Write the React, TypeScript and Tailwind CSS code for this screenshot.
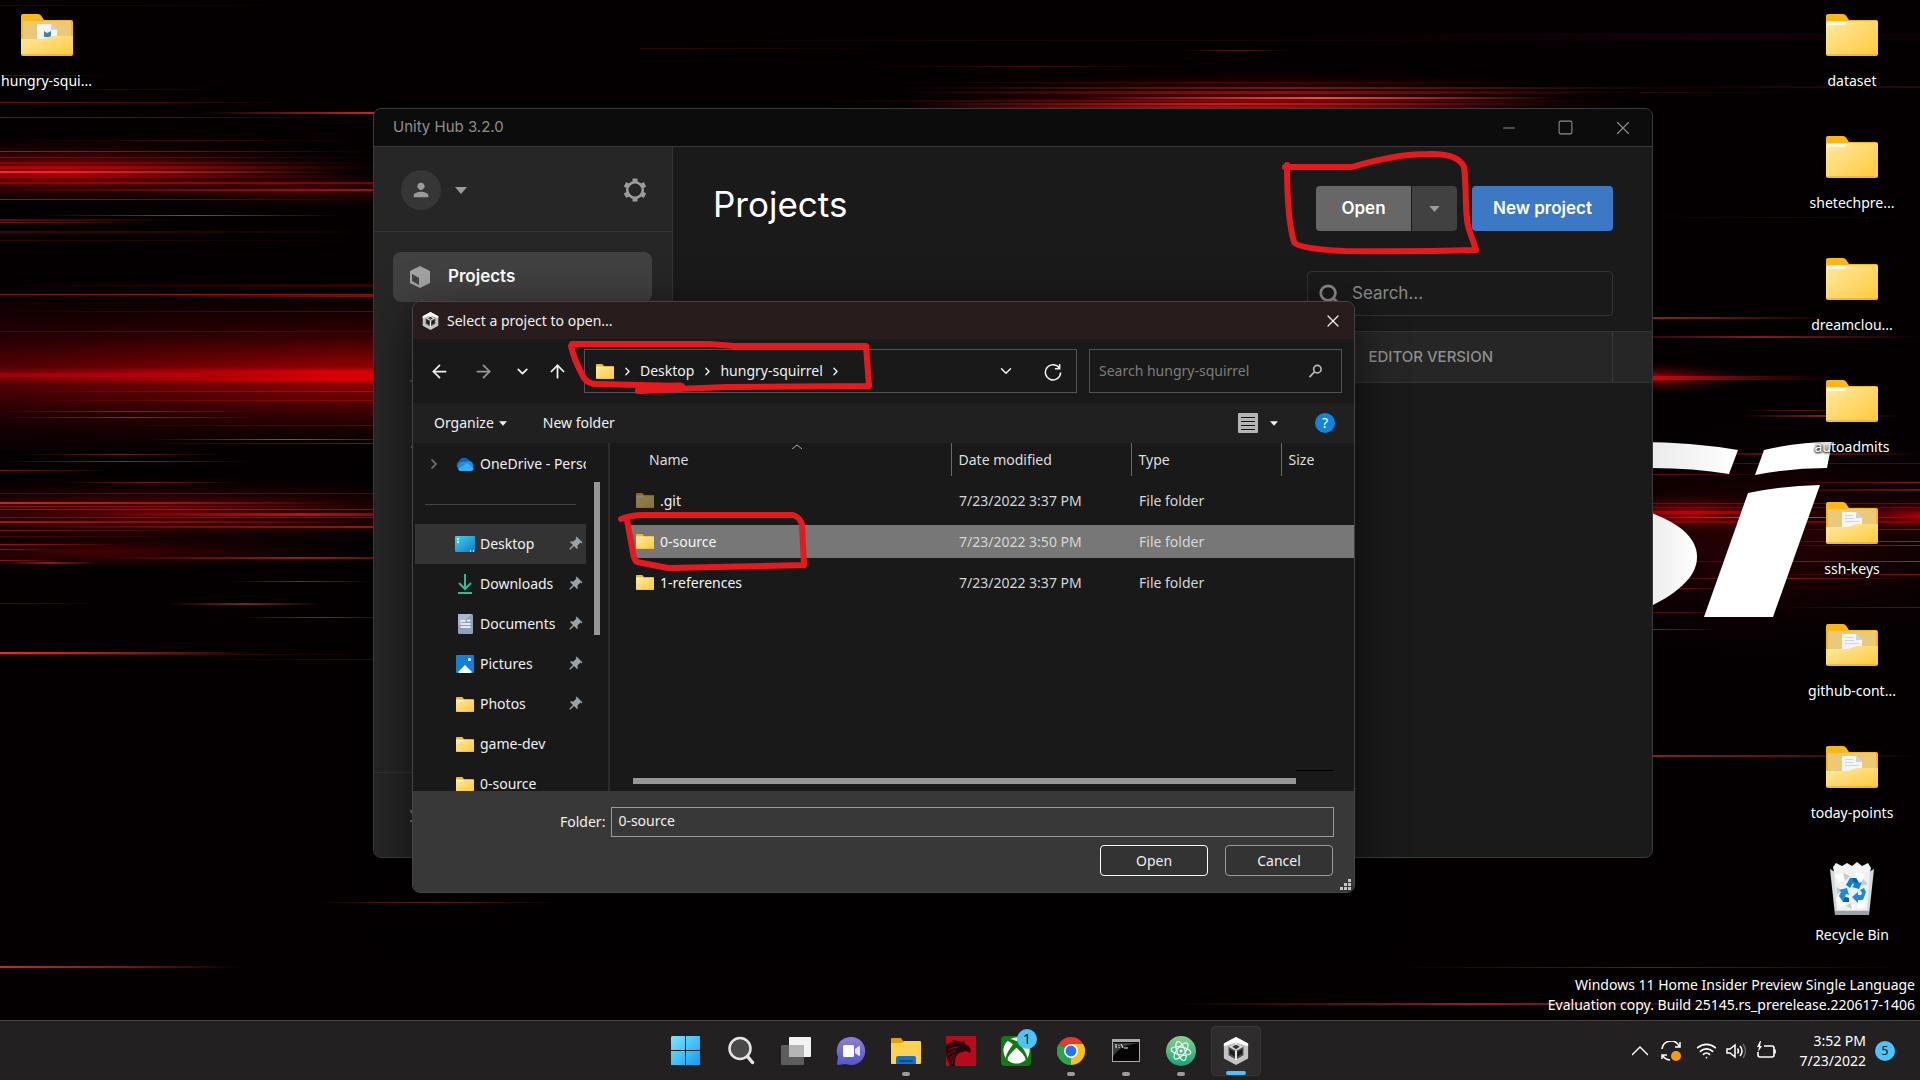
import React from "react";
import {
  ArrowLeft,
  ArrowRight,
  ArrowUp,
  ChevronDown,
  ChevronRight,
  Minus,
  Square,
  X,
  Search,
  Wifi,
} from "lucide-react";
import { FaXbox } from "react-icons/fa";
import { MdPerson, MdPushPin } from "react-icons/md";

/* ---------- wallpaper ---------- */

type Fade = "left" | "right" | "mid" | "flat";
type Streak = [x1: number, x2: number, y: number, h: number, color: string, opacity: number, fade: Fade];

const streaks: Streak[] = [
  [0, 300, 5, 1, "#7a0008", 0.4, "left"],
  [0, 110, 75, 1, "#a01010", 0.6, "left"],
  [0, 230, 89, 1, "#5a0505", 0.5, "mid"],
  [0, 300, 102, 1, "#901010", 0.8, "left"],
  [200, 560, 112, 2, "#e02020", 1, "mid"],
  [0, 373, 117, 1, "#8a1010", 0.9, "left"],
  [0, 373, 140, 1, "#5a0808", 0.7, "mid"],
  [0, 373, 151, 1, "#c01414", 0.9, "left"],
  [0, 373, 157, 1, "#8a0808", 0.9, "left"],
  [0, 373, 162, 2, "#8a0808", 0.8, "left"],
  [0, 380, 166, 3, "#b00808", 0.9, "left"],
  [0, 340, 171, 2, "#ff2038", 1, "left"],
  [0, 373, 175, 3, "#a00008", 0.8, "left"],
  [0, 373, 182, 2, "#a00808", 0.8, "flat"],
  [0, 373, 189, 2, "#b01212", 0.9, "right"],
  [0, 373, 199, 1, "#b01414", 0.9, "left"],
  [40, 340, 215, 1, "#c05030", 0.8, "mid"],
  [0, 180, 219, 2, "#7a0a0a", 0.8, "left"],
  [0, 150, 222, 1, "#a01010", 0.8, "left"],
  [0, 373, 231, 2, "#4a0505", 0.9, "left"],
  [0, 373, 240, 1, "#300404", 0.9, "left"],
  [0, 373, 284, 3, "#4a0303", 0.7, "right"],
  [0, 373, 294, 1, "#b01818", 0.9, "flat"],
  [150, 500, 295, 2, "#b81010", 1, "right"],
  [0, 373, 311, 1, "#6a0a0a", 0.8, "right"],
  [0, 373, 331, 1, "#5a0808", 0.8, "flat"],
  [0, 373, 391, 1, "#c00c0c", 0.8, "right"],
  [0, 373, 400, 1, "#a01010", 0.7, "right"],
  [0, 260, 411, 1, "#9a3020", 0.8, "mid"],
  [0, 260, 417, 1, "#a03020", 0.9, "mid"],
  [100, 373, 425, 1, "#6a0a0a", 0.8, "right"],
  [150, 430, 439, 1, "#d04030", 0.9, "mid"],
  [150, 373, 443, 1, "#9a1414", 0.8, "right"],
  [20, 220, 454, 1, "#8a2018", 0.9, "mid"],
  [0, 250, 461, 1, "#9a3020", 0.9, "mid"],
  [0, 110, 470, 1, "#901410", 0.9, "left"],
  [60, 240, 482, 1, "#a02018", 0.8, "mid"],
  [0, 373, 493, 1, "#6a0808", 0.9, "flat"],
  [0, 340, 502, 2, "#d02424", 1, "left"],
  [0, 373, 506, 1, "#9a1010", 0.9, "left"],
  [0, 373, 509, 1, "#b01414", 0.9, "flat"],
  [100, 500, 513, 3, "#d00808", 1, "mid"],
  [0, 373, 517, 1, "#901010", 0.9, "flat"],
  [0, 373, 521, 2, "#b81414", 0.9, "left"],
  [0, 373, 526, 2, "#b81010", 0.9, "right"],
  [0, 200, 530, 1, "#901010", 0.9, "left"],
  [0, 200, 536, 1, "#5a0505", 0.9, "left"],
  [0, 130, 544, 1, "#b01414", 0.9, "left"],
  [0, 50, 549, 1, "#b01414", 0.9, "left"],
  [100, 500, 557, 2, "#a01818", 1, "mid"],
  [0, 60, 560, 1, "#a01414", 0.9, "left"],
  [0, 100, 562, 2, "#a01c18", 0.9, "mid"],
  [230, 373, 581, 1, "#a02018", 0.9, "mid"],
  [0, 100, 603, 1, "#5a0a0a", 0.9, "left"],
  [170, 320, 603, 2, "#90281c", 0.9, "mid"],
  [240, 400, 617, 1, "#a02820", 0.9, "mid"],
  [0, 260, 652, 2, "#e03424", 1, "left"],
  [0, 373, 654, 1, "#7a1010", 0.8, "left"],
  [200, 373, 659, 1, "#500808", 0.7, "right"],
  [320, 560, 902, 1, "#9a2424", 1, "mid"],
  [0, 240, 966, 2, "#d02820", 1, "left"],

  [640, 1540, 40, 1, "#4a0a18", 0.4, "mid"],
  [640, 900, 48, 1, "#5a0808", 0.5, "left"],
  [1180, 1290, 50, 1, "#a02020", 0.6, "mid"],
  [860, 1200, 66, 1, "#5a0606", 0.7, "mid"],
  [900, 1540, 82, 1, "#600606", 0.8, "mid"],
  [900, 1700, 87, 2, "#7a2424", 0.8, "mid"],
  [900, 1650, 91, 3, "#a00808", 0.9, "mid"],
  [1080, 1560, 97, 2, "#f05040", 1, "mid"],
  [820, 1600, 100, 2, "#8a0808", 0.9, "mid"],
  [900, 1560, 103, 2, "#d02020", 0.9, "mid"],
  [900, 1500, 106, 3, "#c00808", 0.9, "mid"],

  [1300, 2100, 33, 7, "#200012", 0.6, "mid"],
  [1640, 1920, 86, 2, "#30101c", 0.7, "right"],
  [1640, 1800, 92, 1, "#5a0808", 0.5, "left"],
  [1640, 1920, 217, 1, "#300404", 0.8, "mid"],
  [1600, 1830, 317, 2, "#b02424", 1, "left"],
  [1600, 1920, 336, 2, "#9a1c1c", 0.9, "mid"],
  [1600, 1830, 376, 4, "#d80810", 0.9, "left"],
  [1740, 1860, 410, 1, "#701414", 0.9, "mid"],
  [1740, 1900, 415, 2, "#8a2020", 0.9, "mid"],
  [1690, 1920, 453, 2, "#9a1c1c", 0.9, "mid"],
  [1640, 1920, 463, 1, "#6a0a0a", 0.8, "flat"],
  [1640, 1780, 474, 1, "#7a1010", 0.9, "left"],
  [1780, 1920, 482, 1, "#b01414", 0.9, "right"],
  [1780, 1920, 489, 2, "#7a1414", 0.9, "right"],
  [1640, 1920, 503, 1, "#b00c0c", 0.6, "flat"],
  [1640, 1920, 507, 1, "#8a0808", 0.7, "flat"],
  [1560, 1830, 511, 3, "#c00404", 0.9, "mid"],
  [1640, 1920, 517, 1, "#f06060", 0.9, "mid"],
  [1640, 1920, 521, 2, "#a00404", 0.7, "flat"],
  [1780, 1920, 529, 1, "#9a1010", 0.9, "right"],
  [1760, 1920, 541, 1, "#d01c1c", 0.9, "right"],
  [1780, 1920, 545, 1, "#b81414", 0.9, "right"],
  [1640, 1920, 561, 1, "#c82020", 0.9, "right"],
  [1760, 1920, 574, 1, "#9a1010", 0.9, "right"],
  [1640, 1920, 578, 1, "#a81818", 0.9, "mid"],
  [1640, 1730, 588, 1, "#7a0a0a", 0.9, "mid"],
  [1780, 1920, 607, 1, "#7a0c0c", 0.9, "right"],
  [1640, 1740, 612, 1, "#7a0c0c", 0.9, "left"],
  [1640, 1720, 629, 1, "#b01818", 0.9, "left"],
  [1640, 1920, 755, 2, "#a02424", 0.9, "left"],
  [1400, 1900, 967, 1, "#8a1414", 0.9, "mid"],
  [1180, 1760, 1003, 2, "#b02018", 0.9, "mid"],
];

const fadeStops: Record<Fade, number[]> = {
  left: [1, 0.6, 0],
  right: [0, 0.6, 1],
  mid: [0, 1, 0],
  flat: [0.8, 1, 0.8],
};

function Wallpaper() {
  return (
    <svg className="absolute inset-0 h-full w-full" aria-hidden="true">
      <defs>
        <radialGradient id="glow">
          <stop offset="0" stopColor="#b80008" stopOpacity="0.95" />
          <stop offset="0.5" stopColor="#6a0006" stopOpacity="0.5" />
          <stop offset="1" stopColor="#200002" stopOpacity="0" />
        </radialGradient>
        <linearGradient id="band" x2="0" y2="1">
          <stop offset="0" stopColor="#200002" stopOpacity="0" />
          <stop offset="0.3" stopColor="#3a0003" />
          <stop offset="0.48" stopColor="#900004" />
          <stop offset="0.51" stopColor="#d80006" />
          <stop offset="0.56" stopColor="#d80006" />
          <stop offset="0.59" stopColor="#8a0004" />
          <stop offset="0.75" stopColor="#480003" stopOpacity="0.9" />
          <stop offset="1" stopColor="#200002" stopOpacity="0" />
        </linearGradient>
        <linearGradient id="bandShade">
          <stop offset="0" stopColor="#100004" stopOpacity="0.5" />
          <stop offset="0.8" stopColor="#100004" stopOpacity="0" />
        </linearGradient>
        <linearGradient id="letter">
          <stop offset="0" stopColor="#e8e8e8" />
          <stop offset="1" stopColor="#ffffff" />
        </linearGradient>
        {streaks.map(([, , , , color, , fade], i) => (
          <linearGradient id={`streak${i}`} key={i}>
            {fadeStops[fade].map((o, k) => (
              <stop key={k} offset={k / 2} stopColor={color} stopOpacity={o} />
            ))}
          </linearGradient>
        ))}
      </defs>
      <rect width="100%" height="100%" fill="#040002" />
      <ellipse cx="60" cy="172" rx="340" ry="34" fill="url(#glow)" />
      <ellipse cx="300" cy="190" rx="200" ry="20" fill="url(#glow)" opacity="0.4" />
      <rect y="290" width="420" height="160" fill="url(#band)" />
      <rect y="290" width="420" height="160" fill="url(#bandShade)" />
      <rect y="373" width="200" height="4" fill="#c8001c" opacity="0.5" />
      <ellipse cx="160" cy="512" rx="420" ry="36" fill="url(#glow)" opacity="0.6" />
      <ellipse cx="100" cy="552" rx="300" ry="20" fill="url(#glow)" opacity="0.4" />
      <ellipse cx="1260" cy="108" rx="380" ry="40" fill="url(#glow)" opacity="0.85" />
      <ellipse cx="1650" cy="378" rx="110" ry="16" fill="url(#glow)" />
      <ellipse cx="1760" cy="540" rx="320" ry="120" fill="url(#glow)" opacity="0.25" />
      <ellipse cx="1690" cy="514" rx="120" ry="22" fill="url(#glow)" />
      <ellipse cx="1920" cy="516" rx="110" ry="20" fill="url(#glow)" />
      {streaks.map(([x1, x2, y, h, , opacity], i) => (
        <rect key={i} x={x1} y={y} width={x2 - x1} height={h} fill={`url(#streak${i})`} opacity={opacity} />
      ))}
      <path d="M1640 442q50 0 98 8l-9 24q-40-7-89-6z" fill="url(#letter)" />
      <path d="M1764 450q34-8 68-8l-5 26q-36 0-72 7z" fill="#fff" />
      <path d="M1748 493q34-7 72-8l-47 132h-69z" fill="#fff" />
      <path d="M1640 509c38 12 57 28 57 48s-20 38-57 54z" fill="url(#letter)" />
    </svg>
  );
}

/* ---------- drawn icons ---------- */

function FolderIcon({ className = "" }: { className?: string }) {
  return (
    <svg viewBox="0 0 52 42" preserveAspectRatio="none" className={className} aria-hidden="true">
      <defs>
        <linearGradient id="folderFront" x2="1" y2="1">
          <stop offset="0" stopColor="#ffe9a3" />
          <stop offset="1" stopColor="#ffc938" />
        </linearGradient>
      </defs>
      <path d="M0 2q0-2 2-2h15q2 0 3 1.500l3 4.500h27q2 0 2 2v8H0z" fill="#fbb718" />
      <path d="M0 9q0-2 2-2h48q2 0 2 2v31q0 2-2 2H2q-2 0-2-2z" fill="url(#folderFront)" />
      <path d="M1 10q0-2 2-2h19l-4 3H3q-2 0-2 2z" fill="#fff8e0" />
      <path d="M1 41h50" stroke="#d9a02a" />
    </svg>
  );
}

function FilledFolderIcon({ mark = false }: { mark?: boolean }) {
  return (
    <svg viewBox="0 0 52 42" className="h-[42px] w-[52px]" aria-hidden="true">
      <path d="M0 2q0-2 2-2h15q2 0 3 1.500l3 4.500h27q2 0 2 2v20H0z" fill="#fbb718" />
      <rect x="2" y="7" width="48" height="24" fill="#ecc978" />
      <path d="M16 10h14l6 6v14H16z" fill="#f4f5f6" />
      <path d="M30 10l6 6h-6z" fill="#c9d3da" />
      {mark ? (
        <path d="M23 17l3 2 4-2v6h-7z" fill="#3d84ad" />
      ) : (
        <path d="M19 13.500h8M19 16.500h9M19 19.500h14" stroke="#d3d6d9" />
      )}
      <path d="M0 25h20q3 0 6-1.500t6-1.500h20v18q0 2-2 2H2q-2 0-2-2z" fill="url(#folderFront)" />
      <path d="M1 41h50" stroke="#d9a02a" />
    </svg>
  );
}

function RecycleBinIcon() {
  return (
    <svg viewBox="0 0 44 54" className="h-[54px] w-[44px]" aria-hidden="true">
      <path d="M3 5l3-4 6 3 5-3 5 3 5-4 5 4 6-3 3 5-2 8H5z" fill="#f1f3f4" />
      <path d="M0 7l5 3h34l5-3-5 46H5z" fill="#d4d9dc" />
      <path d="M4 10h36l-3 38H7z" fill="#eef0f1" />
      <path d="M5 13l8-2 5 6-9 4zM26 10l9 2-3 7-8-3zM6 36l8-3 4 8-9 5zM28 38l8-4v11l-9 2zM18 42l8 1-3 5z" fill="#fff" />
      <path d="M13 11l7 3-5 5zM33 17l5 5-7 2zM6 25l6 3-5 5zM16 44l5-3 1 6z" fill="#c6cbcf" />
      <path d="M5 49h34v4H5z" fill="#9ba3a8" />
      <path d="M16 23l4-7h6l3 5 3-1-3 7-7-2 2-2-1-2-3 5z" fill="#0f7fd6" />
      <path d="M9 28l8-2 2 7-3-1-1 3 4 1v4h-6l-4-6 2-4z" fill="#168be6" />
      <path d="M34 26l2 4-3 8h-5v3l-6-6 6-5v3h3l1-2-2-3z" fill="#168be6" />
      <path d="M15 35l4 1v4h-6zM26 16l3 5-5-1-2-4z" fill="#0a5fb0" />
    </svg>
  );
}

function UnityIcon({ className = "" }: { className?: string }) {
  return (
    <svg viewBox="0 0 26 30" className={className} aria-hidden="true">
      <path d="M13 0l13 7v16l-13 7-13-7V7z" fill="#c4c4c4" />
      <path d="M13 0l13 7v3l-13-4L0 10V7z" fill="#fff" />
      <path d="M13 6l8 4.500v9L13 24l-8-4.500v-9z" fill="#4a4a4a" />
      <path d="M13 6l8 4.500-8 4.500-8-4.500z" fill="#d9d9d9" />
      <path d="M13 8l4 2.500-4 2.500-4-2.500z" fill="#3a3a3a" />
      <path d="M6.500 13l5 3v5l-5-3z" fill="#1c1c1c" />
      <path d="M19.500 13l-5 3v5l5-3z" fill="#1c1c1c" />
      <path d="M13 15v10M13 3v5" stroke="#f2f2f2" strokeWidth="2" />
    </svg>
  );
}

function CubeIcon() {
  return (
    <svg viewBox="0 0 20 22" className="h-[22px] w-5" aria-hidden="true">
      <path fillRule="evenodd" d="M10 0l10 5v12l-10 5L0 17V5zM2 8v7l7 4v-7z" fill="#a3a3a3" />
    </svg>
  );
}

function GearIcon() {
  return (
    <svg viewBox="0 0 24 24" className="h-6 w-6" fill="none" stroke="#9b9b9b" aria-hidden="true">
      <circle cx="12" cy="12" r="7.800" strokeWidth="2.600" />
      <path
        d="M12 .5V4M12 20v3.500M2 6.300l3 1.700M19 16l3 1.700M2 17.700L5 16M19 8l3-1.700"
        strokeWidth="5"
      />
    </svg>
  );
}

function Caret({ className = "" }: { className?: string }) {
  return (
    <svg viewBox="0 0 12 7" className={className} aria-hidden="true">
      <path d="M0 0h12L6 7z" fill="currentColor" />
    </svg>
  );
}

function OneDriveIcon() {
  return (
    <svg viewBox="0 0 20 14" className="h-[14px] w-5" aria-hidden="true">
      <path d="M5 13a5 5 0 0 1-1-9 6 6 0 0 1 10-1l2 3-8 7z" fill="#0f63c4" />
      <path d="M6 5l9-1a5 5 0 0 1 1 9H5a5 4.500 0 0 1 1-8z" fill="#1a8fe3" />
      <path d="M3 12l9-6 7 6q-1 2-4 2H5q-1 0-2-2z" fill="#32b0f5" />
    </svg>
  );
}

function DesktopIcon() {
  return (
    <svg viewBox="0 0 20 17" className="h-[17px] w-5" aria-hidden="true">
      <defs>
        <linearGradient id="desk" x2="1" y2="1">
          <stop offset="0" stopColor="#3fd3e8" />
          <stop offset="1" stopColor="#1279c9" />
        </linearGradient>
      </defs>
      <rect width="20" height="16" rx="1" fill="url(#desk)" />
      <path d="M2 3h2M2 6h2M15 15h1M18 15h1" stroke="#fff" strokeWidth="1.500" />
    </svg>
  );
}

function DownloadsIcon() {
  return (
    <svg viewBox="0 0 16 20" className="h-5 w-4" fill="none" stroke="#2bbd93" strokeWidth="2" aria-hidden="true">
      <path d="M8 0v14M2 9l6 6 6-6M1 19h14" />
    </svg>
  );
}

function DocumentsIcon() {
  return (
    <svg viewBox="0 0 15 20" className="h-5 w-[15px]" aria-hidden="true">
      <rect width="15" height="20" rx="1.500" fill="#8ea2bd" />
      <path d="M0 1q0-1 1-1h13l-14 12z" fill="#a9b9ce" />
      <path d="M2.500 7h5M2.500 10h10M2.500 13h10M9 6.500h3.500" stroke="#fff" strokeWidth="1.500" />
    </svg>
  );
}

function PicturesIcon() {
  return (
    <svg viewBox="0 0 18 18" className="h-[18px] w-[18px]" aria-hidden="true">
      <rect width="18" height="18" rx="1" fill="#147fd8" />
      <path d="M2 17l7-7 7 7q-1 1-2 1H4q-1 0-2-1z" fill="#fff" />
      <circle cx="13.500" cy="4.500" r="1.500" fill="#fff" />
    </svg>
  );
}

/* ---------- desktop ---------- */

function DesktopItem({ label, children }: { label: string; children: React.ReactNode }) {
  return (
    <li className="flex h-[122px] flex-col items-center pt-[7px]">
      <span className="flex h-14 items-center">{children}</span>
      <span className="mt-2 text-sm leading-5 whitespace-nowrap text-white [text-shadow:0_1px_2px_#000,0_0_3px_#000]">
        {label}
      </span>
    </li>
  );
}

const bigFolder = "h-[42px] w-[52px]";

/* ---------- Unity Hub ---------- */

function HubWindow() {
  return (
    <section
      aria-label="Unity Hub"
      className="absolute top-[108px] left-[373px] flex h-[750px] w-[1280px] flex-col overflow-hidden rounded-lg border border-[#3c3c3c] bg-[#1a1a1a] font-[Inter,sans-serif]"
    >
      <header className="flex h-[38px] items-center justify-between border-b border-[#3a3a3a] bg-[#0c0c0c] pl-[19px] text-[#8f8f8f]">
        <span className="text-[15px]">Unity Hub 3.2.0</span>
        <span className="flex pr-px">
          <button aria-label="Minimize" className="grid w-[57px] place-items-center"><Minus size={18} strokeWidth={1.5} /></button>
          <button aria-label="Maximize" className="grid w-[57px] place-items-center"><Square size={17} strokeWidth={1.5} /></button>
          <button aria-label="Close" className="grid w-[57px] place-items-center"><X size={22} strokeWidth={1.2} /></button>
        </span>
      </header>
      <div className="flex flex-1">
        <aside className="flex w-[299px] flex-col border-r border-[#333] bg-[#262626]">
          <div className="flex h-[85px] items-center border-b border-[#343434] pt-0.5 pr-[25px] pl-[27px]">
            <button aria-label="Account" className="flex items-center gap-[14px] text-[#9b9b9b]">
              <span className="grid h-10 w-10 place-items-center rounded-full bg-[#363636]"><MdPerson size={22} /></span>
              <Caret className="h-[7px] w-3" />
            </button>
            <button aria-label="Settings" className="ml-auto"><GearIcon /></button>
          </div>
          <button className="mt-5 mr-5 ml-[19px] flex h-[50px] items-center gap-[18px] rounded-lg bg-[#414141] pl-[17px] text-[17px] font-semibold text-white">
            <CubeIcon />
            Projects
          </button>
          <svg viewBox="0 0 20 80" className="mt-[72px] ml-9 h-20 w-5" fill="#777" aria-hidden="true">
            <path d="M10 2l10 5-10 5L0 7zM10 66a4 4 0 1 1 0 8H1q0-6 9-8z" />
          </svg>
          <div className="mt-auto h-[85px] border-t border-[#343434] pt-9 pl-9">
            <svg viewBox="0 0 20 14" className="h-[14px] w-5" fill="none" stroke="#777" strokeWidth="2" aria-hidden="true">
              <path d="M0 1l4 5M0 12h18" />
            </svg>
          </div>
        </aside>
        <main className="flex flex-1 flex-col">
          <div className="flex items-start justify-between pt-[39px] pr-[39px] pl-10">
            <h1 className="text-[35px] leading-9 text-white">Projects</h1>
            <div className="flex gap-[15px] text-[17px] font-semibold text-white">
              <div className="flex h-[45px] gap-px overflow-hidden rounded">
                <button className="w-[95px] bg-[#676767]">Open</button>
                <button aria-label="More open options" className="grid w-[45px] place-items-center bg-[#414141] text-[#9b9b9b]">
                  <Caret className="h-[6px] w-[11px]" />
                </button>
              </div>
              <button className="h-[45px] w-[141px] rounded bg-[#3d78c4]">New project</button>
            </div>
          </div>
          <label className="mt-10 mr-[39px] flex h-[45px] w-[306px] items-center gap-3 self-end rounded border border-[#333] pl-[10px] text-[#8a8a8a]">
            <Search size={22} strokeWidth={3} className="shrink-0" />
            <input aria-label="Search projects" placeholder="Search..." className="w-full bg-transparent text-[17px] outline-none placeholder:text-[#8a8a8a]" />
          </label>
          <div className="mt-[15px] flex h-[52px] items-center border-y border-[#333] bg-[#262626]">
            <span className="flex h-full flex-1 items-center justify-end border-r border-[#3a3a3a] pr-[119px] text-[15px] font-medium text-[#8f8f8f]">
              EDITOR VERSION
            </span>
            <span className="w-[39px]" />
          </div>
        </main>
      </div>
    </section>
  );
}

/* ---------- folder picker ---------- */

const smallFolder = "h-[15px] w-[18px]";

const places = [
  { name: "Desktop", icon: <DesktopIcon />, pinned: true, active: true },
  { name: "Downloads", icon: <DownloadsIcon />, pinned: true },
  { name: "Documents", icon: <DocumentsIcon />, pinned: true },
  { name: "Pictures", icon: <PicturesIcon />, pinned: true },
  { name: "Photos", icon: <FolderIcon className={smallFolder} />, pinned: true },
  { name: "game-dev", icon: <FolderIcon className={smallFolder} /> },
  { name: "0-source", icon: <FolderIcon className={smallFolder} /> },
];

const files = [
  { name: ".git", date: "7/23/2022 3:37 PM", hidden: true },
  { name: "0-source", date: "7/23/2022 3:50 PM", selected: true },
  { name: "1-references", date: "7/23/2022 3:37 PM" },
];

function Crumb() {
  return (
    <span className="grid w-[26px] place-items-center"><ChevronRight size={13} strokeWidth={2.5} /></span>
  );
}

function PickerDialog() {
  return (
    <section
      role="dialog"
      aria-label="Select a project to open..."
      className="absolute top-[301px] left-[412px] flex w-[943px] flex-col overflow-hidden rounded-lg border border-[#454343] bg-[#191919] text-sm text-[#f0f0f0] shadow-[0_12px_48px_rgba(0,0,0,0.6)]"
    >
      <header className="flex h-[37px] items-center gap-2 bg-[#281c1c] pr-[11px] pl-[9px]">
        <UnityIcon className="h-[18px] w-[17px]" />
        <h2>Select a project to open...</h2>
        <button aria-label="Close dialog" className="ml-auto"><X size={20} strokeWidth={1.5} /></button>
      </header>
      <div className="flex h-16 items-center pr-3 pl-1">
        <button aria-label="Back" className="grid w-11 place-items-center"><ArrowLeft size={21} strokeWidth={2} /></button>
        <button aria-label="Forward" className="grid w-11 place-items-center text-[#9a9a9a]"><ArrowRight size={21} strokeWidth={2} /></button>
        <button aria-label="Recent locations" className="grid w-[34px] place-items-center"><ChevronDown size={17} strokeWidth={2.5} /></button>
        <button aria-label="Up" className="grid w-9 place-items-center"><ArrowUp size={21} strokeWidth={2} /></button>
        <nav aria-label="Path" className="ml-[9px] flex h-11 flex-1 items-center border border-[#535353] pr-[13px] pl-[11px]">
          <FolderIcon className={smallFolder} />
          <Crumb />
          <a href="#desktop">Desktop</a>
          <Crumb />
          <a href="#hungry-squirrel">hungry-squirrel</a>
          <Crumb />
          <button aria-label="Previous locations" className="mr-[28px] ml-auto"><ChevronDown size={18} strokeWidth={2} /></button>
          <button aria-label="Refresh">
            <svg viewBox="0 0 20 20" className="h-[19px] w-5" fill="none" stroke="currentColor" strokeWidth="1.600" aria-hidden="true">
              <path d="M17 7a8 8 0 1 0 1 4M17 2v5h-5" />
            </svg>
          </button>
        </nav>
        <label className="ml-3 flex h-11 w-[253px] items-center border border-[#535353] pr-[18px] pl-[9px]">
          <input aria-label="Search hungry-squirrel" placeholder="Search hungry-squirrel" className="min-w-0 flex-1 bg-transparent outline-none placeholder:text-[#7d7d7d]" />
          <svg viewBox="0 0 15 15" className="h-[14px] w-[15px]" fill="none" stroke="#b8b8b8" strokeWidth="1.800" aria-hidden="true">
            <circle cx="9.500" cy="5.500" r="4" />
            <path d="M6.500 8.500L1 14" />
          </svg>
        </label>
      </div>
      <div className="flex h-10 items-center bg-[#202020] pr-[19px] pl-[21px]">
        <button className="flex items-center gap-[5px]">
          Organize <Caret className="h-[5px] w-2" />
        </button>
        <button className="ml-9">New folder</button>
        <button aria-label="View" className="ml-auto flex items-center gap-3">
          <svg viewBox="0 0 20 20" className="h-5 w-5" aria-hidden="true">
            <rect width="20" height="20" rx="1" fill="#b5b5b5" />
            <path d="M3 4.500h14M3 8.500h14M3 12.500h14M3 16.500h14" stroke="#151515" />
          </svg>
          <Caret className="h-[5px] w-2" />
        </button>
        <button aria-label="Help" className="ml-[37px] grid h-5 w-5 place-items-center rounded-full bg-[#0f86dc] text-sm leading-5 text-white">?</button>
      </div>
      <div className="flex h-[348px] overflow-hidden">
        <aside className="flex w-[197px] shrink-0 border-r-2 border-[#2b2b2b] pl-0.5">
          <ul className="w-[171px]">
            <li className="flex h-[41px] items-center overflow-hidden whitespace-nowrap">
              <ChevronRight size={16} strokeWidth={2.5} className="mr-[13px] ml-[11px] shrink-0 text-[#777]" />
              <span className="mr-[5px] shrink-0"><OneDriveIcon /></span>
              OneDrive - Personal
            </li>
            <li className="flex h-10 items-center px-[10px]"><hr className="w-full border-[#454545]" /></li>
            {places.map((p) => (
              <li key={p.name}>
                <button className={`flex h-10 w-full items-center pr-[3px] pl-10 ${p.active ? "bg-[#333]" : ""}`}>
                  <span className="mr-[5px] grid w-5 place-items-center">{p.icon}</span>
                  {p.name}
                  {p.pinned && <MdPushPin size={17} className="ml-auto rotate-45 text-[#9aa3ab]" />}
                </button>
              </li>
            ))}
          </ul>
          <span className="mt-[39px] ml-2 h-[153px] w-[6px] bg-[#979797]" />
        </aside>
        <div className="relative flex flex-1 flex-col">
          <svg viewBox="0 0 10 5" className="absolute top-px left-[182px] h-[5px] w-[10px]" fill="none" stroke="#aaa" aria-hidden="true">
            <path d="M0 5l5-4 5 4" />
          </svg>
          <table className="w-full table-fixed text-left">
            <colgroup>
              <col className="w-[21px]" />
              <col className="w-[320px]" />
              <col className="w-[180px]" />
              <col className="w-[150px]" />
              <col />
            </colgroup>
            <thead className="text-[#dedede]">
              <tr className="h-[33px]">
                <td />
                <th className="pl-[18px] font-normal">Name</th>
                <th className="border-l border-[#6a6a6a] pl-[7px] font-normal">Date modified</th>
                <th className="border-l border-[#6a6a6a] pl-[7px] font-normal">Type</th>
                <th className="border-l border-[#6a6a6a] pl-[7px] font-normal">Size</th>
              </tr>
            </thead>
            <tbody>
              <tr className="h-1"><td colSpan={5} /></tr>
              {files.map((f) => {
                const cell = `flex h-[33px] items-center my-1 ${f.selected ? "bg-[#777]" : ""}`;
                return (
                  <tr key={f.name} className="text-[#d6d6d6]">
                    <td />
                    <td>
                      <div className={`${cell} gap-[6px] pl-[5px] text-[#f4f4f4]`}>
                        <FolderIcon className={f.hidden ? "h-[15px] w-[18px] opacity-50" : smallFolder} />
                        {f.name}
                      </div>
                    </td>
                    <td><div className={`${cell} pl-2`}>{f.date}</div></td>
                    <td><div className={`${cell} pl-2`}>File folder</div></td>
                    <td><div className={cell} /></td>
                  </tr>
                );
              })}
            </tbody>
          </table>
          <div className="mt-auto mb-[7px] flex flex-col pl-[23px]">
            <span className="mr-[21px] mb-[7px] h-px w-[37px] self-end bg-black" />
            <span className="mr-[58px] h-[6px] bg-[#979797]" />
          </div>
        </div>
      </div>
      <footer className="relative flex h-[101px] flex-col bg-[#383838] pt-4 pr-5">
        <label className="flex items-center gap-[6px] pl-[147px]">
          Folder:
          <input defaultValue="0-source" className="h-[30px] min-w-0 flex-1 border border-[#9b9b9b] bg-transparent px-[6px] pb-1 outline-none" />
        </label>
        <div className="mt-2 flex justify-end gap-[17px] pr-px">
          <button className="h-[31px] w-[108px] rounded border border-white bg-[#333]">Open</button>
          <button className="h-[31px] w-[108px] rounded border border-[#9b9b9b] bg-[#333]">Cancel</button>
        </div>
        <svg viewBox="0 0 12 12" className="absolute right-0.5 bottom-px h-3 w-3" fill="#c4c4c4" aria-hidden="true">
          <path d="M8 0h3v3H8zM4 4h3v3H4zM8 4h3v3H8zM0 8h3v3H0zM4 8h3v3H4zM8 8h3v3H8z" />
        </svg>
      </footer>
    </section>
  );
}

/* ---------- pen strokes drawn on top ---------- */

function PenMarks() {
  return (
    <svg
      className="pointer-events-none absolute inset-0 h-full w-full"
      fill="none"
      stroke="#e61a1e"
      strokeWidth="6"
      strokeLinecap="round"
      strokeLinejoin="round"
      aria-hidden="true"
    >
      <path d="M1285 167L1352 167Q1395 154 1428 154Q1458 153 1464 167C1467 190 1464 218 1470 232L1476 250Q1410 252 1345 251Q1297 249 1294 242C1288 222 1287 190 1287 165" />
      <path d="M572 344L709 344L734 346L866 346L869 386L727 387L677 389L638 391L682 386L597 384Q588 384 584 378Q574 360 571 346" />
      <path d="M640 389L680 387" strokeWidth="9" />
      <path d="M621 519Q632 515 643 515L793 515Q801 518 802 525L804 565L668 568L637 562Q634 560 633 553L627 520" />
    </svg>
  );
}

/* ---------- taskbar ---------- */

function TaskButton({
  label,
  running = false,
  active = false,
  children,
}: {
  label: string;
  running?: boolean;
  active?: boolean;
  children: React.ReactNode;
}) {
  return (
    <button
      aria-label={label}
      className={`relative grid h-[50px] w-[50px] place-items-center rounded ${active ? "border border-[#3a3738] bg-[#2f2c2d]" : ""}`}
    >
      {children}
      {running && <span className="absolute bottom-0 h-1 w-2 rounded-full bg-[#9c9c9c]" />}
      {active && <span className="absolute bottom-0 h-1 w-5 rounded-full bg-[#4cc2ff]" />}
    </button>
  );
}

const icon30 = "h-[30px] w-[30px]";

function Taskbar() {
  return (
    <footer className="grid h-[60px] grid-cols-[1fr_auto_1fr] items-center border-t border-[#434143] bg-[#222021] text-white">
      <span />
      <div className="flex gap-[5px] pl-0.5">
        <TaskButton label="Start">
          <svg viewBox="0 0 30 30" className={icon30} aria-hidden="true">
            <defs>
              <linearGradient id="win" x2="1" y2="1" gradientUnits="objectBoundingBox">
                <stop offset="0" stopColor="#7fe6fb" />
                <stop offset="1" stopColor="#0f9bf5" />
              </linearGradient>
            </defs>
            <path d="M1 0h13v14H0V1zM15 0h14v14H15zM0 15h14v14H0zM15 15h14v14H15z" fill="url(#win)" />
          </svg>
        </TaskButton>
        <TaskButton label="Search">
          <svg viewBox="0 0 30 30" className={icon30} aria-hidden="true">
            <circle cx="14" cy="12.500" r="10.500" fill="#4a4a4a" stroke="#e6e6e6" strokeWidth="2.500" />
            <path d="M21.500 20.500l5 6" stroke="#e6e6e6" strokeWidth="3.500" strokeLinecap="round" />
          </svg>
        </TaskButton>
        <TaskButton label="Task view">
          <svg viewBox="0 0 30 30" className={icon30} aria-hidden="true">
            <rect x="8" y="1" width="22" height="20" rx="1" fill="#f3f3f3" />
            <rect x="0" y="9" width="23" height="20" rx="1" fill="#5d5d5d" />
            <path d="M8 9h15v12H8z" fill="#b5b5b5" />
          </svg>
        </TaskButton>
        <TaskButton label="Chat">
          <svg viewBox="0 0 30 30" className={icon30} aria-hidden="true">
            <defs>
              <linearGradient id="chat" x2="0" y2="1">
                <stop offset="0" stopColor="#8f7fd0" />
                <stop offset="1" stopColor="#5257cf" />
              </linearGradient>
            </defs>
            <path d="M15 1a14 14 0 1 1-5 27l-8 1q-1 0-1-1l1-7A14 14 0 0 1 15 1z" fill="url(#chat)" />
            <rect x="7" y="9" width="11" height="12" rx="1.500" fill="#fff" />
            <path d="M19 13l4-3q1 0 1 1v8q0 1-1 1l-4-3z" fill="#e4e3fb" />
          </svg>
        </TaskButton>
        <TaskButton label="File Explorer" running>
          <svg viewBox="0 0 30 30" className={icon30} aria-hidden="true">
            <path d="M0 3q0-1 1-1h9l3 4h16q1 0 1 1v20H0z" fill="#e0a010" />
            <path d="M0 7h11l2-2h16q1 0 1 1v21q0 1-1 1H1q-1 0-1-1z" fill="#ffd24d" />
            <path d="M5 22q0-2 2-2h16q2 0 2 2v6H5z" fill="#1172c8" />
            <path d="M8 25h14" stroke="#083f7c" strokeWidth="1.500" />
          </svg>
        </TaskButton>
        <TaskButton label="Dragon Center">
          <svg viewBox="0 0 30 30" className={icon30} aria-hidden="true">
            <path d="M0 0h30v30H0z" fill="#b80a1c" />
            <path d="M0 9q4-3 8-3l-2-2q6 0 9 2l3-1 1 3 4 2 2 5-1 2-4-2-3 1q-4 0-6 3-3 4-2 11H4q-4-8-4-14z" fill="#2a0509" />
            <path d="M2 14q6-3 10-3M2 19q3-4 8-4M4 24q1-4 4-5M6 28q0-4 2-6" fill="none" stroke="#8d0a18" />
          </svg>
        </TaskButton>
        <TaskButton label="Xbox">
          <span className="grid h-[30px] w-[30px] place-items-center overflow-hidden rounded-sm bg-[#107c10]"><FaXbox size={27} /></span>
          <span className="absolute top-[3px] right-1 grid h-5 w-5 place-items-center rounded-full bg-[#4cc2ff] text-sm leading-5 text-black">1</span>
        </TaskButton>
        <TaskButton label="Chrome" running>
          <svg viewBox="0 0 30 30" className="h-[28px] w-[28px]" aria-hidden="true">
            <path d="M15 15L2 7.500A15 15 0 0 1 28 7.500z" fill="#e33b2e" />
            <path d="M15 15l13-7.500A15 15 0 0 1 15 30z" fill="#fbc116" />
            <path d="M15 15v15A15 15 0 0 1 2 7.500z" fill="#2da14c" />
            <path d="M15 7.500h13l-7 10zM21.500 18L15 30V18z" fill="#fbc116" />
            <path d="M2 7.500L9 19l6 3-1 8A15 15 0 0 1 2 7.500z" fill="#2da14c" />
            <circle cx="15" cy="15" r="7.500" fill="#fff" />
            <circle cx="15" cy="15" r="5.800" fill="#2d73ea" />
          </svg>
        </TaskButton>
        <TaskButton label="Command Prompt" running>
          <svg viewBox="0 0 28 23" className="h-[23px] w-7" aria-hidden="true">
            <path d="M0 0h28v23H0z" fill="#a9adb0" />
            <path d="M1 3h26v19H1z" fill="#050505" />
            <path d="M1 4h26q-20 2-26 14z" fill="#3d3d3d" />
            <path d="M4 5v4M7 6v1M7 8v1M9 5l2 4M12 9h4" stroke="#f5f5f5" fill="none" />
          </svg>
        </TaskButton>
        <TaskButton label="Atom" running>
          <svg viewBox="0 0 30 30" className={icon30} fill="none" aria-hidden="true">
            <defs>
              <linearGradient id="atom" x2="0" y2="1">
                <stop offset="0" stopColor="#8ccf8e" />
                <stop offset="1" stopColor="#17a47a" />
              </linearGradient>
            </defs>
            <circle cx="15" cy="15" r="15" fill="url(#atom)" />
            <g stroke="#e9fff2" strokeWidth="1.200">
              <ellipse cx="15" cy="15" rx="10" ry="4" transform="rotate(10 15 15)" />
              <ellipse cx="15" cy="15" rx="10" ry="4" transform="rotate(70 15 15)" />
              <ellipse cx="15" cy="15" rx="10" ry="4" transform="rotate(130 15 15)" />
            </g>
            <circle cx="15" cy="15" r="1.500" fill="#fff" />
          </svg>
        </TaskButton>
        <TaskButton label="Unity Hub" active>
          <UnityIcon className="h-[28px] w-[26px]" />
        </TaskButton>
      </div>
      <div className="flex items-center justify-end pr-[25px]">
        <button aria-label="Show hidden icons" className="mr-[13px]">
          <svg viewBox="0 0 16 10" className="h-[10px] w-4" fill="none" stroke="#fff" strokeWidth="1.400" aria-hidden="true">
            <path d="M0 9l8-8 8 8" />
          </svg>
        </button>
        <svg viewBox="0 0 20 20" className="mr-[15px] h-5 w-5" fill="none" stroke="#fff" strokeWidth="1.500" aria-hidden="true">
          <path d="M1 8a9 9 0 0 1 17-3M19 1v5h-5M1 18v-4h5M2 15a9 9 0 0 0 7 4" />
          <circle cx="15" cy="15" r="5" fill="#ff9a0d" stroke="none" />
        </svg>
        <Wifi size={21} strokeWidth={2} className="mr-[9px]" />
        <svg viewBox="0 0 20 20" className="mr-[10px] h-5 w-5" fill="none" stroke="#fff" strokeWidth="1.500" aria-hidden="true">
          <path d="M1 8h3l5-4v12l-5-4H1zM11.500 7.500q2 2.500 0 5M14 5q4 5 0 10" />
          <path d="M17 3q5 7 0 14" stroke="#666" />
        </svg>
        <svg viewBox="0 0 20 20" className="h-5 w-5" fill="none" stroke="#fff" strokeWidth="1.600" aria-hidden="true">
          <path d="M8 5h8q2 0 2 2v7q0 2-2 2H4q-2 0-2-2v-3M19 8.500v4" />
          <path d="M4 0L1 6h2L2 11l4-6H4l1-5z" fill="#fff" stroke="none" />
        </svg>
        <p className="w-[90px] text-right text-sm leading-5">
          3:52 PM
          <br />
          7/23/2022
        </p>
        <span className="ml-[9px] grid h-5 w-5 place-items-center rounded-full bg-[#4cc2ff] text-xs text-black">5</span>
      </div>
    </footer>
  );
}

export default function App() {
  return (
    <div className="flex min-h-screen flex-col overflow-hidden bg-black font-['Noto_Sans',sans-serif]">
      <div className="relative flex flex-1 justify-between">
        <Wallpaper />
        <ul className="relative w-[93px]">
          <DesktopItem label="hungry-squi..."><FilledFolderIcon mark /></DesktopItem>
        </ul>
        <ul className="relative w-[136px]">
          <DesktopItem label="dataset"><FolderIcon className={bigFolder} /></DesktopItem>
          <DesktopItem label="shetechpre..."><FolderIcon className={bigFolder} /></DesktopItem>
          <DesktopItem label="dreamclou..."><FolderIcon className={bigFolder} /></DesktopItem>
          <DesktopItem label="autoadmits"><FolderIcon className={bigFolder} /></DesktopItem>
          <DesktopItem label="ssh-keys"><FilledFolderIcon /></DesktopItem>
          <DesktopItem label="github-cont..."><FilledFolderIcon /></DesktopItem>
          <DesktopItem label="today-points"><FilledFolderIcon /></DesktopItem>
          <DesktopItem label="Recycle Bin"><RecycleBinIcon /></DesktopItem>
        </ul>
        <HubWindow />
        <PickerDialog />
        <PenMarks />
        <p className="absolute right-[5px] bottom-[5px] text-right text-sm leading-5 text-white">
          Windows 11 Home Insider Preview Single Language
          <br />
          Evaluation copy. Build 25145.rs_prerelease.220617-1406
        </p>
      </div>
      <Taskbar />
    </div>
  );
}
